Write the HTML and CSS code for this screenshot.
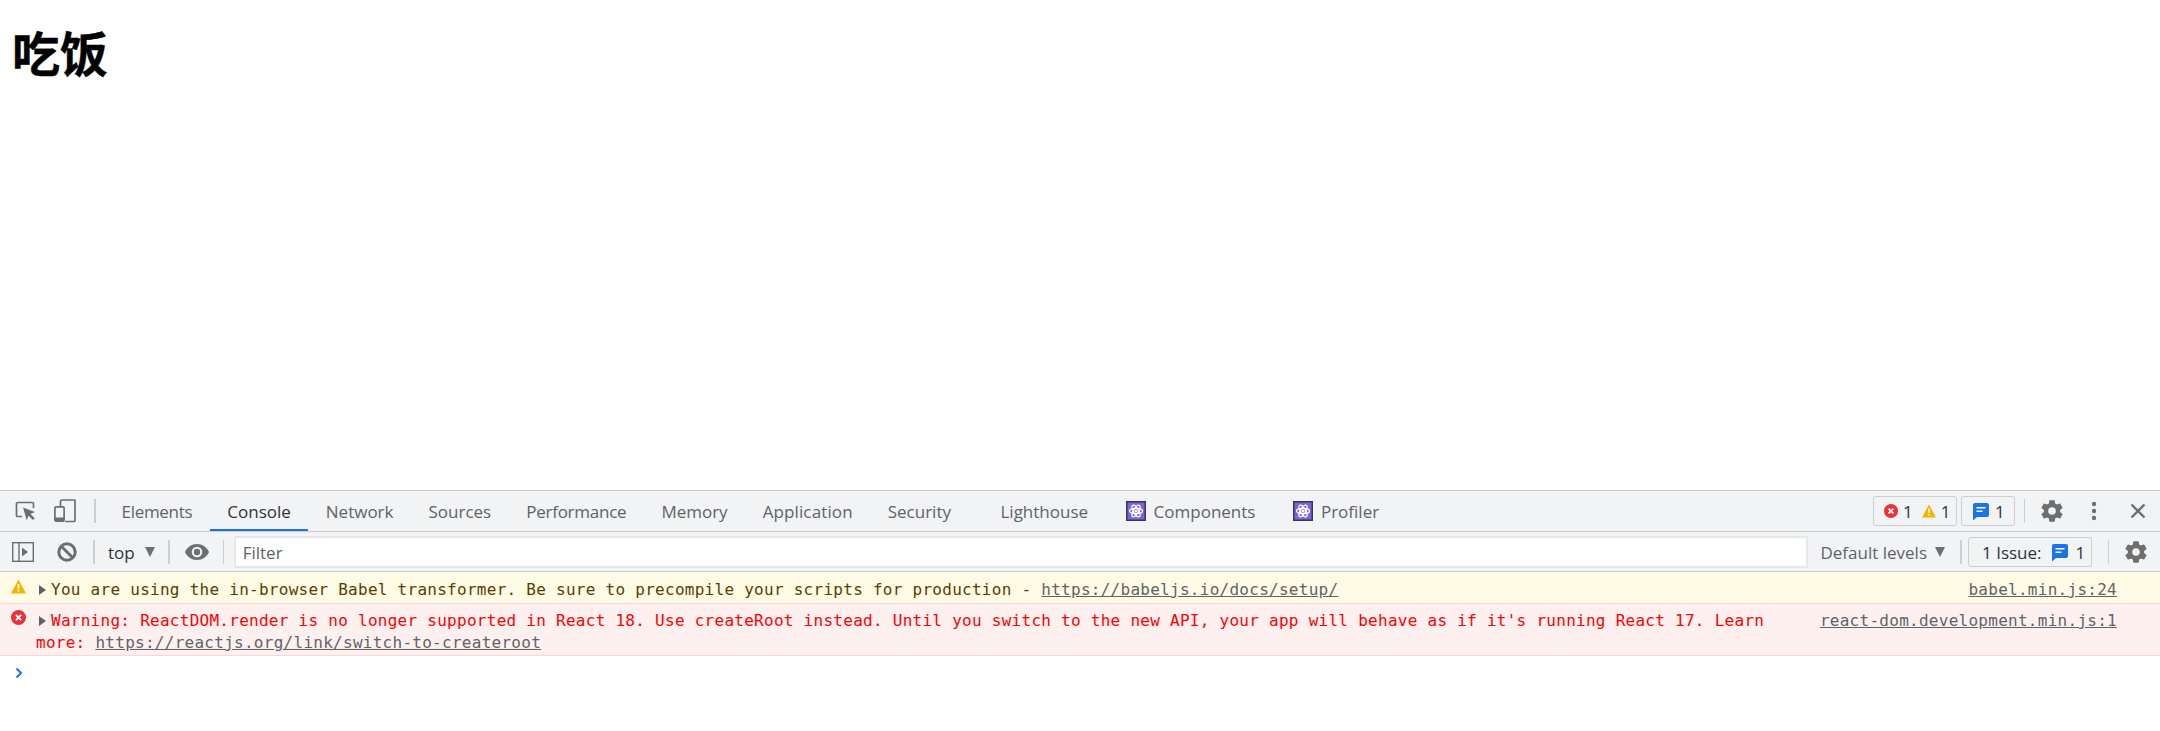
FILE: index.html
```html
<!DOCTYPE html>
<html lang="zh">
<head>
<meta charset="utf-8">
<title>吃饭</title>
<link rel="stylesheet" href="styles.css">
</head>
<body>
<svg class="defs" width="0" height="0">
  <defs>
    <symbol id="gear" viewBox="0 0 24 24"><path d="M19.43 12.98c.04-.32.07-.64.07-.98s-.03-.66-.07-.98l2.11-1.65c.19-.15.24-.42.12-.64l-2-3.46c-.12-.22-.39-.3-.61-.22l-2.49 1c-.52-.4-1.08-.73-1.69-.98l-.38-2.65A.49.49 0 0 0 14 2h-4c-.25 0-.46.18-.49.42l-.38 2.65c-.61.25-1.17.59-1.69.98l-2.49-1a.5.5 0 0 0-.61.22l-2 3.46c-.13.22-.07.49.12.64l2.11 1.65c-.04.32-.07.65-.07.98s.03.66.07.98l-2.11 1.65c-.19.15-.24.42-.12.64l2 3.46c.12.22.39.3.61.22l2.49-1c.52.4 1.08.73 1.69.98l.38 2.65c.03.24.24.42.49.42h4c.25 0 .46-.18.49-.42l.38-2.65c.61-.25 1.17-.59 1.69-.98l2.49 1c.23.09.49 0 .61-.22l2-3.46c.12-.22.07-.49-.12-.64l-2.11-1.65zM12 15.5a3.5 3.5 0 1 1 0-7 3.5 3.5 0 0 1 0 7z"/></symbol>
    <symbol id="err" viewBox="0 0 14 14"><circle cx="7" cy="7" r="7" fill="#e8333c"/><path d="M4.6 4.6l4.8 4.8M9.4 4.6l-4.8 4.8" stroke="#fff" stroke-width="1.7" fill="none"/></symbol>
    <symbol id="warn" viewBox="0 0 14 14"><path d="M7 .5L14 13.500H0z" fill="#f4b400"/><path d="M6.200 4.600h1.600v4.400H6.200zM6.200 10h1.600v1.600H6.200z" fill="#fff"/></symbol>
    <symbol id="msg" viewBox="0 0 16 17"><path d="M2 0h12a2 2 0 0 1 2 2v10a2 2 0 0 1-2 2H4l-4 3.500V2a2 2 0 0 1 2-2z" fill="#1a73e8"/><path d="M3.500 4h9v1.600h-9zM3.500 7.500h6v1.600h-6z" fill="#fff"/></symbol>
    <symbol id="react" viewBox="0 0 20 20"><rect x=".75" y=".75" width="18.500" height="18.500" fill="#7d63de" stroke="#3a3948" stroke-width="1.500"/><g fill="none" stroke="#fff" stroke-width="1.300"><ellipse cx="10" cy="10" rx="6.500" ry="2.600"/><ellipse cx="10" cy="10" rx="6.500" ry="2.600" transform="rotate(60 10 10)"/><ellipse cx="10" cy="10" rx="6.500" ry="2.600" transform="rotate(120 10 10)"/></g><circle cx="10" cy="10" r="1.500" fill="#fff"/></symbol>
  </defs>
</svg>
<main class="page">
  <h1 class="title">吃饭</h1>
</main>
<section class="devtools">
  <div class="tabbar">
    <svg class="ico inspect" viewBox="0 0 21 20"><path d="M7 15.500H2.500a1 1 0 0 1-1-1v-12a1 1 0 0 1 1-1h15a1 1 0 0 1 1 1V7" fill="none" stroke="#6e6e6e" stroke-width="1.700"/><path d="M8 6.500l12 4.500-4.600 1.900 4.400 4.400-1.800 1.800-4.400-4.400-1.900 4.600z" fill="#6e6e6e"/></svg>
    <svg class="ico device" viewBox="0 0 22 24"><path d="M6.500 7V2.500A1.500 1.500 0 0 1 8 1h12.500a.5.500 0 0 1 .5.500v20a1 1 0 0 1-1 1H11" fill="none" stroke="#6e6e6e" stroke-width="1.700"/><rect x=".9" y="7.900" width="9.200" height="14.200" rx="1.200" fill="none" stroke="#6e6e6e" stroke-width="1.700"/><rect x="1" y="18.500" width="9" height="3.500" fill="#6e6e6e"/></svg>
    <span class="sep sep-tabs"></span>
    <nav class="tabs">
      <span class="tab tab-elements">Elements</span>
      <span class="tab active">Console</span>
      <span class="tab">Network</span>
      <span class="tab">Sources</span>
      <span class="tab tab-tight">Performance</span>
      <span class="tab">Memory</span>
      <span class="tab tab-loose">Application</span>
      <span class="tab tab-wide">Security</span>
      <span class="tab">Lighthouse</span>
      <span class="tab"><svg class="react"><use href="#react"/></svg>Components</span>
      <span class="tab"><svg class="react"><use href="#react"/></svg>Profiler</span>
    </nav>
    <div class="tabbar-right">
      <span class="pill pill-counts"><svg class="i14"><use href="#err"/></svg><b>1</b><svg class="i14 warn-gap"><use href="#warn"/></svg><b>1</b></span>
      <span class="pill pill-msg"><svg class="i16"><use href="#msg"/></svg><b>1</b></span>
      <span class="sep sep-thin sep-right"></span>
      <svg class="gear gear-top"><use href="#gear"/></svg>
      <svg class="ico dots" viewBox="0 0 6 20"><circle cx="3" cy="3" r="2.200"/><circle cx="3" cy="10" r="2.200"/><circle cx="3" cy="17" r="2.200"/></svg>
      <svg class="ico close" viewBox="0 0 16 16"><path d="M1.500 1.500l13 13M14.500 1.500l-13 13" stroke="#6e6e6e" stroke-width="2.400" fill="none"/></svg>
    </div>
  </div>
  <div class="toolbar">
    <svg class="ico sidebar" viewBox="0 0 22 20"><rect x=".7" y=".7" width="20.600" height="18.600" fill="none" stroke="#6e6e6e" stroke-width="1.400"/><path d="M7 .7v18.600" stroke="#6e6e6e" stroke-width="1.400"/><path d="M10 5.500l6 4.500-6 4.500z" fill="#6e6e6e"/></svg>
    <svg class="ico block" viewBox="0 0 20 20"><circle cx="10" cy="10" r="8.200" fill="none" stroke="#6e6e6e" stroke-width="3"/><path d="M4.200 4.200l11.600 11.600" stroke="#6e6e6e" stroke-width="3"/></svg>
    <span class="sep sep-ctx"></span>
    <span class="ctx">top</span>
    <span class="caret caret-ctx"></span>
    <span class="sep sep-eye"></span>
    <svg class="ico eye" viewBox="0 0 24 16"><path d="M12 0C6.500 0 2 3.300 0 8c2 4.700 6.500 8 12 8s10-3.300 12-8c-2-4.700-6.500-8-12-8zm0 13.300A5.300 5.300 0 1 1 12 2.700a5.300 5.300 0 0 1 0 10.600z" fill="#6e6e6e"/><circle cx="12" cy="8" r="3.200" fill="#6e6e6e"/></svg>
    <span class="sep sep-thin sep-filter"></span>
    <div class="filter">Filter</div>
    <span class="levels">Default levels</span>
    <span class="caret caret-levels"></span>
    <span class="sep sep-issue"></span>
    <span class="pill pill-issue"><b>1 Issue:</b><svg class="i16 msg-gap"><use href="#msg"/></svg><b>1</b></span>
    <span class="sep sep-thin sep-gear"></span>
    <svg class="gear gear-bottom"><use href="#gear"/></svg>
  </div>
  <div class="console">
    <div class="row row-warn">
      <div class="msg"><svg class="lvl"><use href="#warn"/></svg><span class="tri"></span>You are using the in-browser Babel transformer. Be sure to precompile your scripts for production - <a class="lnk">https://babeljs.io/docs/setup/</a></div>
      <a class="src">babel.min.js:24</a>
    </div>
    <div class="row row-err">
      <div class="msg"><svg class="lvl"><use href="#err"/></svg><span class="tri"></span>Warning: ReactDOM.render is no longer supported in React 18. Use createRoot instead. Until you switch to the new API, your app will behave as if it's running React 17. Learn<br>more: <a class="lnk">https://reactjs.org/link/switch-to-createroot</a></div>
      <a class="src">react-dom.development.min.js:1</a>
    </div>
    <div class="prompt"><svg class="chev" viewBox="0 0 8 12"><path d="M1.500 1.500L6 6l-4.500 4.500" fill="none" stroke="#2f74e8" stroke-width="2.200"/></svg></div>
  </div>
</section>
</body>
</html>
```

FILE: styles.css
```css
* { box-sizing: border-box; }
html, body { margin: 0; height: 100%; }
body {
  display: flex;
  flex-direction: column;
  height: 731px;
  overflow: hidden;
  background: #fff;
  font-family: "Open Sans", "Noto Sans", sans-serif;
}
.defs { display: block; height: 0; }
.page { height: 490px; flex: none; padding: 0 12px; }
.title {
  margin: 0;
  padding-top: 19px;
  font: 700 48px/64px "Noto Sans CJK SC", sans-serif;
  -webkit-text-stroke: .4px #000;
  color: #000;
}
.devtools { flex: 1; display: flex; flex-direction: column; }
.tabbar {
  height: 42px;
  flex: none;
  display: flex;
  align-items: center;
  background: #f1f3f5;
  border-top: 1px solid #c9ccd0;
  border-bottom: 1px solid #c9ccd0;
  font-size: 17px;
  color: #5f6368;
}
.ico { display: block; flex: none; }
.inspect { width: 21px; height: 20px; margin-left: 15px; }
.device { width: 22px; height: 24px; margin-left: 18px; }
.sep { display: block; flex: none; width: 2px; height: 24px; background: #ccced1; }
.sep-thin { width: 1px; }
.sep-tabs { margin-left: 18px; }
.tabs { display: flex; align-self: stretch; margin-left: 8px; }
.tab {
  display: flex;
  align-items: center;
  padding: 2px 17.500px 0;
  height: 40px;
  white-space: nowrap;
  border-bottom: 2px solid transparent;
}
.tab.active { color: #303438; border-bottom-color: #1a73e8; }
.tab-elements { letter-spacing: -.3px; }
.tab-tight { letter-spacing: -.25px; }
.tab-loose { letter-spacing: .12px; }
.tab-wide { padding-right: 32px; }
.react { width: 20px; height: 20px; margin-left: 2.500px; margin-right: 8px; }
.tabbar-right { margin-left: auto; display: flex; align-items: center; }
.pill {
  display: flex;
  align-items: center;
  height: 30px;
  border: 1px solid #ccced1;
  border-radius: 3px;
  color: #303438;
}
.pill b { font-weight: 400; }
.pill-counts { width: 84px; padding-left: 10px; }
.pill-msg { width: 54px; margin-left: 4px; padding-left: 11px; }
.i14 { width: 14px; height: 14px; margin-right: 5px; flex: none; }
.i16 { width: 16px; height: 17px; margin-right: 6px; flex: none; }
.warn-gap { margin-left: 9px; }
.sep-right { margin-left: 9px; }
.gear { width: 26px; height: 26px; fill: #6e6e6e; flex: none; }
.gear-top { margin-left: 14px; }
.dots { width: 6px; height: 20px; margin-left: 26px; fill: #6e6e6e; }
.close { width: 16px; height: 16px; margin-left: 33px; margin-right: 14px; }
.toolbar {
  height: 40px;
  flex: none;
  display: flex;
  align-items: center;
  background: #f1f3f5;
  border-bottom: 1px solid #c9ccd0;
  font-size: 17px;
  color: #303438;
}
.sidebar { width: 22px; height: 20px; margin-left: 12px; }
.block { width: 20px; height: 20px; margin-left: 23px; }
.sep-ctx { margin-left: 16px; }
.ctx { margin-left: 13px; padding-top: 1px; }
.caret { display: block; width: 0; height: 0; flex: none; border-left: 5.500px solid transparent; border-right: 5.500px solid transparent; border-top: 10px solid #6e6e6e; }
.caret-ctx { margin-left: 10px; }
.sep-eye { margin-left: 13px; }
.eye { width: 24px; height: 16px; margin-left: 15px; }
.sep-filter { margin-left: 14px; }
.filter {
  flex: 1;
  height: 32px;
  margin-left: 10px;
  padding-left: 7px;
  background: #fff;
  border: 2px solid #e6e8eb;
  color: #5f6368;
  line-height: 30px;
}
.levels { margin-left: 12px; color: #5f6368; padding-top: 1px; }
.caret-levels { margin-left: 8px; }
.sep-issue { margin-left: 15px; }
.pill-issue { width: 124px; margin-left: 6px; padding-left: 13px; padding-top: 1px; }
.msg-gap { margin-left: 10px; margin-right: 8px; }
.sep-gear { margin-left: 16px; }
.gear-bottom { margin-left: 14px; margin-right: 11px; }
.console { font: 16px/22px "DejaVu Sans Mono", monospace; letter-spacing: .27px; }
.row { display: flex; align-items: flex-start; border-bottom: 1px solid #ffd6d6; }
.row-warn { height: 32px; padding-top: 7px; background: #fffbe5; color: #5c3c00; }
.row-err { height: 52px; padding-top: 6px; background: #fff0f0; color: #f00; }
.msg { flex: 1; padding-left: 36px; white-space: nowrap; }
.lvl { display: inline-block; width: 15px; height: 15px; margin-left: -25px; margin-right: 13px; vertical-align: 1px; }
.tri { display: inline-block; width: 0; height: 0; margin-right: 5px; border-top: 5px solid transparent; border-bottom: 5px solid transparent; border-left: 7px solid #5f6368; vertical-align: 0; }
.lnk, .src { color: #5f6368; text-decoration: underline; }
.src { margin-right: 43px; flex: none; }
.prompt { padding: 11px 0 0 15px; }
.chev { display: block; width: 8px; height: 12px; }
```
